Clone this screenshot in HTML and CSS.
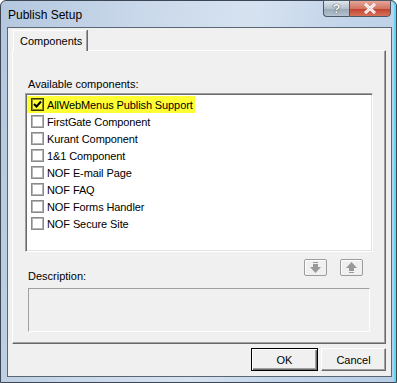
FILE: index.html
```html
<!DOCTYPE html>
<html lang="en">
<head>
    <meta charset="UTF-8">
    <title>Publish Setup</title>
    <link rel="stylesheet" href="styles.css">
</head>
<body>
    <div class="window">
        <div class="titlebar">
            <span class="title">Publish Setup</span>
            <div class="caption-buttons">
                <div class="cap help">?</div>
                <div class="cap close">
                    <svg width="14" height="11" viewBox="0 0 14 11">
                        <path d="M2 1 L12 10 M12 1 L2 10" stroke="#fff" stroke-width="3" fill="none"/>
                        <path d="M2 1 L12 10 M12 1 L2 10" stroke="#7a2a22" stroke-width="0.6" fill="none" opacity="0.4"/>
                    </svg>
                </div>
            </div>
        </div>

        <div class="client">
            <div class="tabs">
                <div class="tab">Components</div>
            </div>
            <div class="panel">
                <div class="label">Available components:</div>
                <div class="list">
                    <div class="item"><span class="row-inner selected"><span class="box">
                        <svg width="9" height="9" viewBox="0 0 9 9"><path d="M1 4 L3.5 6.5 L8 1.5" stroke="#000" stroke-width="2" fill="none"/></svg>
                    </span>AllWebMenus Publish Support</span></div>
                    <div class="item"><span class="row-inner"><span class="box"></span>FirstGate Component</span></div>
                    <div class="item"><span class="row-inner"><span class="box"></span>Kurant Component</span></div>
                    <div class="item"><span class="row-inner"><span class="box"></span>1&amp;1 Component</span></div>
                    <div class="item"><span class="row-inner"><span class="box"></span>NOF E-mail Page</span></div>
                    <div class="item"><span class="row-inner"><span class="box"></span>NOF FAQ</span></div>
                    <div class="item"><span class="row-inner"><span class="box"></span>NOF Forms Handler</span></div>
                    <div class="item"><span class="row-inner"><span class="box"></span>NOF Secure Site</span></div>
                </div>
                <div class="desc-row">
                    <div class="label">Description:</div>
                    <div class="move-buttons">
                        <div class="move">
                            <svg width="11" height="11" viewBox="0 0 11 11"><path d="M3 0 H8 V1 H3 Z M3 2 H8 V5 H11 L5.5 11 L0 5 H3 Z" fill="#999"/></svg>
                        </div>
                        <div class="move">
                            <svg width="11" height="11" viewBox="0 0 11 11"><path d="M5.5 0 L11 6 H8 V9 H3 V6 H0 Z M3 10 H8 V11 H3 Z" fill="#999"/></svg>
                        </div>
                    </div>
                </div>
                <div class="desc"></div>
            </div>
            <div class="footer">
                <button class="btn default">OK</button>
                <button class="btn cancel">Cancel</button>
            </div>
        </div>
    </div>
</body>
</html>
```

FILE: styles.css
```css
body {
    margin: 0;
    font-family: "Liberation Sans", Arial, sans-serif;
    font-size: 11px;
    color: #000;
    background: #fff;
}
.window {
    box-sizing: border-box;
    width: 397px;
    height: 383px;
    border: 1px solid #3c4654;
    border-radius: 6px 6px 0 0;
    background: linear-gradient(100deg, #b4c7de 0%, #c9d8ea 30%, #d6e2f0 55%, #c3d5ea 75%, #b7cde6 100%);
    box-shadow: inset -2px 0 0 #5ed6f5;
}
.titlebar {
    height: 26px;
    display: flex;
    justify-content: space-between;
    align-items: flex-start;
}
.title {
    font-size: 12px;
    padding: 7px 0 0 7px;
    color: #000;
}
.caption-buttons {
    display: flex;
    margin-right: 5px;
    margin-top: -1px;
}
.cap {
    height: 17px;
    box-sizing: border-box;
    border: 1px solid #4d5866;
    display: flex;
    align-items: center;
    justify-content: center;
}
.help {
    width: 26px;
    border-right: none;
    border-radius: 0 0 0 4px;
    background: linear-gradient(#dfe6ee, #b3c0cd 50%, #98a8b8 51%, #b5c2cf);
    color: #fff;
    font-weight: bold;
    font-size: 13px;
    text-shadow: 0 0 1px #333, 0 0 1px #333;
}
.close {
    width: 42px;
    border-radius: 0 0 4px 0;
    background: linear-gradient(#e5a699, #d27563 50%, #c2402c 51%, #d7735c);
}
.client {
    box-sizing: border-box;
    margin-left: 6px;
    width: 385px;
    height: 350px;
    background: #f0f0f0;
    border: 1px solid #5b6673;
    padding-top: 2px;
}
.tabs {
    display: flex;
    padding-left: 5px;
    position: relative;
    z-index: 1;
}
.tab {
    box-sizing: border-box;
    width: 74px;
    height: 21px;
    margin-bottom: -1px;
    padding: 4px 0 0 6px;
    background: #f0f0f0;
    border-top: 1px solid #fff;
    border-left: 1px solid #fff;
    border-right: 1px solid #a0a0a0;
    box-shadow: 1px 0 0 #696969;
}
.panel {
    box-sizing: border-box;
    margin-left: 4px;
    width: 374px;
    height: 294px;
    border-top: 1px solid #fff;
    border-left: 1px solid #fff;
    border-right: 1px solid #696969;
    border-bottom: 1px solid #696969;
    box-shadow: inset -1px -1px 0 #a0a0a0;
    padding: 27px 0 0 12px;
}
.label {
    height: 13px;
    line-height: 13px;
    padding-left: 3px;
    margin-bottom: 2px;
}
.list {
    box-sizing: border-box;
    width: 348px;
    height: 159px;
    background: #fff;
    border-top: 1px solid #a0a0a0;
    border-left: 1px solid #a0a0a0;
    border-right: 1px solid #fff;
    border-bottom: 1px solid #fff;
    box-shadow: inset 1px 1px 0 #696969, inset -1px -1px 0 #e3e3e3;
    padding: 2px 0 0 1px;
    letter-spacing: -0.1px;
}
.item {
    height: 17px;
    display: flex;
}
.row-inner {
    display: inline-flex;
    align-items: center;
    padding: 0 2px 0 4px;
    height: 17px;
}
.selected {
    background: #ffff33;
}
.box {
    box-sizing: border-box;
    width: 13px;
    height: 13px;
    border: 1px solid #8a8a8a;
    box-shadow: inset 0 0 0 1px #b5b5b5;
    margin-right: 3px;
    display: flex;
    align-items: center;
    justify-content: center;
}
.selected .box {
    border-color: #3a3a00;
    box-shadow: inset 0 0 0 1px #8b8b1a;
}
.desc-row {
    display: flex;
    justify-content: space-between;
    width: 348px;
    height: 24px;
    margin-top: 7px;
}
.desc-row .label {
    align-self: flex-end;
    margin-bottom: 0;
}
.move-buttons {
    display: flex;
    gap: 13px;
    margin-right: 10px;
}
.move {
    box-sizing: border-box;
    width: 23px;
    height: 17px;
    border: 1px solid #9c9c9c;
    border-radius: 2px;
    background: #f0f0f0;
    box-shadow: inset 1px 1px 0 #fff;
    display: flex;
    align-items: center;
    justify-content: center;
}
.desc {
    box-sizing: border-box;
    margin: 5px 0 0 3px;
    width: 342px;
    height: 44px;
    border-top: 1px solid #a0a0a0;
    border-left: 1px solid #a0a0a0;
    border-right: 1px solid #fff;
    border-bottom: 1px solid #fff;
}
.footer {
    display: flex;
    justify-content: flex-end;
    gap: 3px;
    padding: 4px 5px 0 0;
}
.btn {
    box-sizing: border-box;
    height: 23px;
    font-family: "Liberation Sans", Arial, sans-serif;
    font-size: 11px;
    color: #000;
    background: #f0f0f0;
    border: 1px solid;
    border-color: #fff #696969 #696969 #fff;
    box-shadow: inset -1px -1px 0 #a0a0a0;
    padding: 0;
}
.default {
    width: 67px;
    border: 1px solid #000;
    box-shadow: inset 1px 1px 0 #fff, inset -1px -1px 0 #696969, inset -2px -2px 0 #a0a0a0;
}
.cancel {
    width: 65px;
}
```
